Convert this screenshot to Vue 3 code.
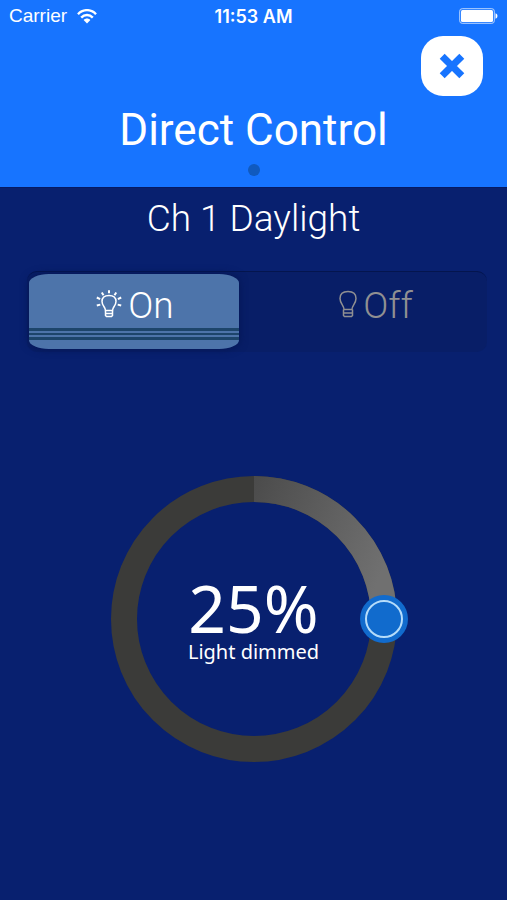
<script setup>
import { computed, ref } from 'vue'

const power = ref('on')
const level = ref(25)

const RADIUS = 130
const CENTER = 155
const angle = computed(() => (level.value / 100) * 2 * Math.PI)
const knob = computed(() => ({
  x: CENTER + RADIUS * Math.sin(angle.value),
  y: CENTER - RADIUS * Math.cos(angle.value),
}))
const arc = computed(() => `${level.value} 100`)
</script>

<template>
  <div class="screen">
    <header class="header">
      <div class="status">
        <div class="carrier">
          <span>Carrier</span>
          <svg class="wifi" viewBox="0 0 20 15" aria-hidden="true">
            <path d="M1 5.2C6-.2 14-.2 19 5.2" />
            <path d="M4.200 8.600c3.300-3.500 8.300-3.500 11.600 0" />
            <path class="wifi-core" d="M6.600 11c1.900-2 4.900-2 6.800 0L10 14.500z" />
          </svg>
        </div>
        <time class="clock">11:53 AM</time>
        <svg class="battery" viewBox="0 0 39 16" aria-hidden="true">
          <rect class="battery-case" x=".7" y=".7" width="34.600" height="14.600" rx="2.500" />
          <rect class="battery-fill" x="2" y="2" width="32" height="12" rx="1.500" />
          <path class="battery-fill" d="M36.500 5.300c2.600.8 2.600 4.600 0 5.400z" />
        </svg>
      </div>
      <button class="close" type="button" aria-label="Close">
        <svg viewBox="0 0 26 26" aria-hidden="true">
          <path d="M3.200 3.200l19.600 19.600M22.800 3.200L3.200 22.800" />
        </svg>
      </button>
      <h1 class="title">Direct Control</h1>
      <span class="page-dot"></span>
    </header>

    <main class="content">
      <h2 class="channel">Ch 1 Daylight</h2>

      <div class="switch" role="radiogroup" aria-label="Power">
        <label class="option" :class="{ active: power === 'on' }">
          <input v-model="power" type="radio" name="power" value="on" />
          <svg class="bulb" viewBox="0 0 26 28" aria-hidden="true">
            <path d="M9.500 20.500c0-3.500-3.500-4.700-3.500-9 0-4 3-6 7-6s7 2 7 6c0 4.300-3.500 5.500-3.500 9z" />
            <path d="M9.500 20.500v5l1 1h5l1-1v-5M9.500 23.500h7" />
            <path class="rays" d="M13 .3v3M5.800 2.500l1.700 2.700M20.200 2.500l-1.700 2.700M.8 7.500l3.300 1.600M25.200 7.500l-3.300 1.600M.8 15.500l3.500-.9M25.200 15.500l-3.500-.9" />
          </svg>
          <span>On</span>
        </label>
        <label class="option" :class="{ active: power === 'off' }">
          <input v-model="power" type="radio" name="power" value="off" />
          <svg class="bulb bulb-off" viewBox="0 0 18 28" aria-hidden="true">
            <path d="M5 19.500c0-4-4-6-4-11C1 4 4 1.500 9 1.500s8 2.500 8 7c0 5-4 7-4 11z" />
            <path d="M4.500 19.500v6l1 1h7l1-1v-6M4.500 23h9" />
          </svg>
          <span>Off</span>
        </label>
      </div>

      <div class="dial">
        <svg class="ring" viewBox="0 0 310 310" aria-hidden="true">
          <defs>
            <linearGradient id="level-fill" gradientUnits="userSpaceOnUse" x1="298" y1="155" x2="240" y2="298">
              <stop offset="0" stop-color="#4b4b4b" />
              <stop offset="1" stop-color="#707070" />
            </linearGradient>
          </defs>
          <circle class="track" :cx="CENTER" :cy="CENTER" :r="RADIUS" />
          <circle
            class="value"
            :cx="CENTER"
            :cy="CENTER"
            :r="RADIUS"
            pathLength="100"
            :stroke-dasharray="arc"
            stroke="url(#level-fill)"
            transform="rotate(-90 155 155)"
          />
          <circle class="knob" :cx="knob.x" :cy="knob.y" r="24" />
          <circle class="knob-ring" :cx="knob.x" :cy="knob.y" r="18" />
        </svg>
        <div class="reading">
          <output class="percent" for="level">{{ level }}%</output>
          <label class="caption" for="level">Light dimmed</label>
        </div>
        <input id="level" v-model.number="level" class="slider" type="range" min="0" max="100" />
      </div>
    </main>
  </div>
</template>

<style>
body {
  background: #08206f;
}
</style>

<style scoped>
.screen {
  min-height: 100vh;
  display: flex;
  flex-direction: column;
  background: #08206f;
  color: #fff;
  font-family: Roboto, "Liberation Sans", sans-serif;
}

.header {
  display: flex;
  flex-direction: column;
  align-items: center;
  padding-bottom: 11px;
  background: #1774ff;
}

.status {
  align-self: stretch;
  display: grid;
  grid-template-columns: 1fr auto 1fr;
  align-items: center;
  height: 32px;
  padding: 0 9px;
  font-family: Inter, "Liberation Sans", sans-serif;
  font-size: 18px;
}

.carrier {
  display: flex;
  align-items: center;
  gap: 10px;
  font-family: "Liberation Sans", sans-serif;
  font-size: 19px;
}

.wifi {
  width: 20px;
  height: 15px;
  fill: none;
  stroke: #fff;
  stroke-width: 2.4;
}

.wifi .wifi-core {
  fill: #fff;
  stroke: none;
}

.clock {
  font-weight: 600;
}

.battery {
  justify-self: end;
  width: 39px;
  height: 16px;
}

.battery-case {
  fill: none;
  stroke: #b9d5ff;
}

.battery-fill {
  fill: #fff;
}

.close {
  align-self: flex-end;
  display: grid;
  place-items: center;
  width: 62px;
  height: 60px;
  margin: 4px 24px 0 0;
  padding: 0;
  border: 0;
  border-radius: 22px;
  background: #fff;
  cursor: pointer;
}

.close svg {
  width: 26px;
  height: 26px;
  stroke: #1774ff;
  stroke-width: 7;
}

.title {
  margin: 8px 0;
  font-size: 44px;
  line-height: 52px;
  font-weight: 400;
}

.page-dot {
  width: 12px;
  height: 12px;
  border-radius: 50%;
  background: #105abf;
}

.content {
  flex: 1;
  display: flex;
  flex-direction: column;
  align-items: center;
  padding: 8px 20px 0;
  border-top: 1px solid #061a62;
}

.channel {
  margin: 0;
  font-size: 37px;
  line-height: 46px;
  font-weight: 300;
}

.switch {
  align-self: stretch;
  display: grid;
  grid-template-columns: 210px 1fr;
  gap: 26px;
  height: 75px;
  margin: 29px 0 0 7px;
  padding: 2px 2px 3px;
  border-top: 1px solid #04154e;
  border-radius: 10px;
  background: #081e67;
}

.option {
  display: flex;
  align-items: center;
  justify-content: center;
  gap: 6px;
  padding: 0 0 12px 2px;
  border-radius: 10px;
  color: #909092;
  font-size: 37px;
  font-weight: 300;
  cursor: pointer;
}

.option input {
  position: absolute;
  opacity: 0;
}

.option.active {
  border-radius: 20px / 9px;
  color: #fff;
  background: linear-gradient(
    #4d74aa 54px,
    #1d456b 54px 57px,
    #4d74aa 57px 59px,
    #1d456b 59px 61px,
    #4d74aa 61px 63px,
    #1d456b 63px 66px,
    #4d74aa 66px
  );
  box-shadow: 0 0 8px #041552;
}

.bulb {
  width: 26px;
  height: 28px;
  margin-bottom: 4px;
  fill: none;
  stroke: currentColor;
  stroke-width: 1.5;
}

.bulb .rays {
  stroke-width: 2;
}

.bulb-off {
  width: 18px;
}

.dial {
  position: relative;
  display: grid;
  place-items: center;
  width: 310px;
  margin: 112px 0 0;
}

.ring,
.reading,
.slider {
  grid-area: 1 / 1;
}

.ring {
  width: 100%;
}

.track,
.value {
  fill: none;
  stroke-width: 26;
}

.track {
  stroke: #3b3b39;
}

.knob {
  fill: #116bcd;
}

.knob-ring {
  fill: none;
  stroke: #b5dcfa;
  stroke-width: 2;
}

.reading {
  display: flex;
  flex-direction: column;
  align-items: center;
  gap: 3px;
  padding-top: 3px;
  font-family: "Noto Sans", sans-serif;
}

.percent {
  font-size: 66px;
  line-height: 60px;
}

.caption {
  font-size: 20px;
  line-height: 24px;
}

.slider {
  width: 100%;
  height: 100%;
  margin: 0;
  opacity: 0;
  cursor: pointer;
}
</style>
